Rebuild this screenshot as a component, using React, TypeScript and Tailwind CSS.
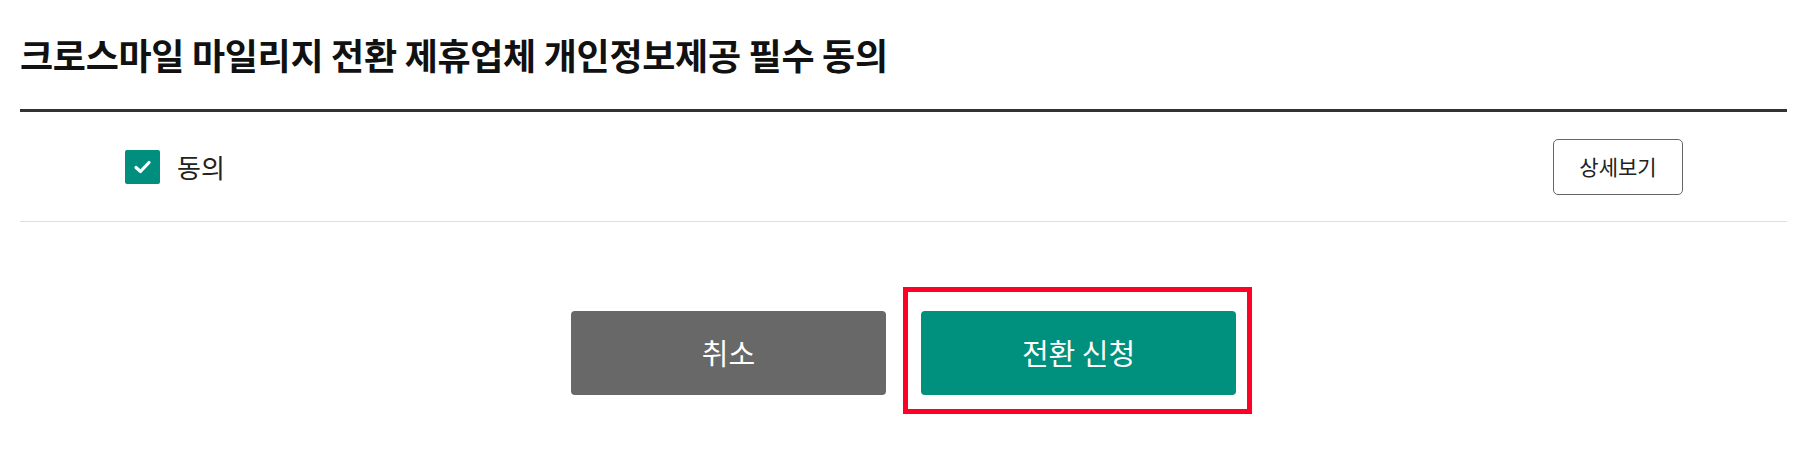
import React from "react";

const font = { fontFamily: '"Noto Sans CJK KR", "Noto Sans", sans-serif' };

function CheckBox() {
  return (
    <span className="flex h-[34px] w-[35px] items-center justify-center rounded-[2px] bg-[#008f7e]">
      <svg width="35" height="34" viewBox="0 0 35 34" fill="none">
        <path
          d="M11 17.5 L15.5 21.5 L24 12.5"
          stroke="white"
          strokeWidth="3.2"
          strokeLinecap="round"
          strokeLinejoin="round"
        />
      </svg>
    </span>
  );
}

export default function App() {
  return (
    <div className="h-[450px] w-[1805px] bg-white" style={font}>
      <div className="ml-[20px] w-[1767px]">
        <h1 className="pt-[25px] pb-[26px] text-[36px] font-bold leading-[58px] tracking-[-0.3px] text-[#111]">
          크로스마일 마일리지 전환 제휴업체 개인정보제공 필수 동의
        </h1>
        <div className="border-t-[3px] border-[#333]">
          <div className="flex h-[110px] items-center justify-between border-b border-[#dedede] pl-[105px] pr-[104px]">
            <label className="flex items-center gap-[17px]">
              <CheckBox />
              <span className="text-[26px] text-[#222]">동의</span>
            </label>
            <button className="h-[56px] w-[130px] rounded-[5px] border border-[#666] bg-white text-[21px] text-[#222]">
              상세보기
            </button>
          </div>
        </div>
        <div className="mt-[89px] flex justify-center gap-[35px]">
          <button className="h-[84px] w-[315px] rounded-[4px] bg-[#686868] text-[29px] text-white">
            취소
          </button>
          <div className="relative">
            <button className="h-[84px] w-[315px] rounded-[4px] bg-[#00907e] text-[29px] text-white">
              전환 신청
            </button>
            <span className="pointer-events-none absolute -top-[24px] -left-[18px] h-[127px] w-[349px] border-[5px] border-[#ff0027]" />
          </div>
        </div>
      </div>
    </div>
  );
}
